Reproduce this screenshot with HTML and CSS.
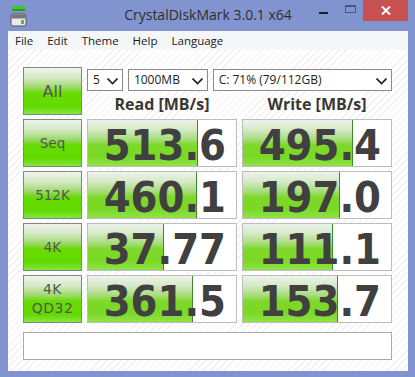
FILE: index.html
```html
<!DOCTYPE html>
<html lang="en">
<head>
    <meta charset="UTF-8">
    <title>CrystalDiskMark 3.0.1 x64</title>
    <link rel="stylesheet" href="styles.css">
</head>
<body>
    <div class="window">
        <div class="titlebar">
            <div class="app-icon">
                <svg width="18" height="22" viewBox="0 0 18 22">
                    <rect x="1" y="0" width="15" height="3" rx="1" fill="#3fc43a"/>
                    <rect x="2" y="3" width="13" height="2" fill="#2a9a28"/>
                    <rect x="1" y="8" width="15" height="12" rx="2" fill="#e9e9e9" stroke="#555" stroke-width="1"/>
                    <rect x="1.5" y="8.5" width="14" height="4" fill="#777"/>
                    <rect x="11" y="14" width="3" height="4" fill="#3fc43a"/>
                </svg>
            </div>
            <div class="title">CrystalDiskMark 3.0.1 x64</div>
            <div class="controls">
                <div class="ctl min"><span class="dash"></span></div>
                <div class="ctl max"><span class="box"></span></div>
                <div class="ctl close">
                    <svg width="10" height="9" viewBox="0 0 10 9">
                        <path d="M1 0.5 L9 8.5 M9 0.5 L1 8.5" stroke="#fff" stroke-width="2"/>
                    </svg>
                </div>
            </div>
        </div>

        <div class="client">
            <div class="menubar">
                <span>File</span>
                <span>Edit</span>
                <span>Theme</span>
                <span>Help</span>
                <span>Language</span>
            </div>

            <div class="panel">
                <div class="test-btn all">All</div>
                <div class="top">
                    <div class="selects">
                        <div class="dropdown count">5 <svg class="chev" width="11" height="7" viewBox="0 0 11 7"><path d="M0.5 0.5 L5.5 5.5 L10.5 0.5" fill="none" stroke="#222" stroke-width="1.6"/></svg></div>
                        <div class="dropdown size">1000MB <svg class="chev" width="11" height="7" viewBox="0 0 11 7"><path d="M0.5 0.5 L5.5 5.5 L10.5 0.5" fill="none" stroke="#222" stroke-width="1.6"/></svg></div>
                        <div class="dropdown drive">C: 71% (79/112GB) <svg class="chev" width="11" height="7" viewBox="0 0 11 7"><path d="M0.5 0.5 L5.5 5.5 L10.5 0.5" fill="none" stroke="#222" stroke-width="1.6"/></svg></div>
                    </div>
                    <div class="headers">
                        <div>Read [MB/s]</div>
                        <div>Write [MB/s]</div>
                    </div>
                </div>

                <div class="test-btn">Seq</div>
                <div class="result"><div class="fill" style="width: 74.3%"></div><div class="value">513.6</div></div>
                <div class="result"><div class="fill" style="width: 74.3%"></div><div class="value">495.4</div></div>

                <div class="test-btn">512K</div>
                <div class="result"><div class="fill" style="width: 73.6%"></div><div class="value">460.1</div></div>
                <div class="result"><div class="fill" style="width: 65.5%"></div><div class="value">197.0</div></div>

                <div class="test-btn">4K</div>
                <div class="result"><div class="fill" style="width: 51.4%"></div><div class="value">37.77</div></div>
                <div class="result"><div class="fill" style="width: 60.8%"></div><div class="value">111.1</div></div>

                <div class="test-btn two-line">4K<br>QD32</div>
                <div class="result"><div class="fill" style="width: 70.9%"></div><div class="value">361.5</div></div>
                <div class="result"><div class="fill" style="width: 64.2%"></div><div class="value">153.7</div></div>

                <div class="comment"></div>
            </div>
        </div>
    </div>
</body>
</html>
```

FILE: styles.css
```css
body {
    margin: 0;
    background-color: #8194d0;
    font-family: "Open Sans", "Noto Sans", sans-serif;
}

.window {
    width: 415px;
    height: 377px;
    box-sizing: border-box;
    padding: 0 7px 6px 8px;
}

.titlebar {
    height: 31px;
    display: grid;
    grid-template-columns: 1fr auto 1fr;
    align-items: start;
}

.app-icon {
    padding: 6px 0 0 2px;
}

.title {
    font-size: 14px;
    color: #2e2e2e;
    line-height: 20px;
    padding-top: 5px;
}

.controls {
    display: flex;
    justify-content: flex-end;
}

.ctl {
    height: 21px;
    display: flex;
    align-items: center;
    justify-content: center;
}

.ctl.min {
    width: 27px;
}

.ctl.max {
    width: 26px;
}

.ctl.close {
    width: 45px;
    background-color: #c75050;
}

.dash {
    width: 9px;
    height: 2px;
    background-color: #1e1e1e;
    margin-top: 5px;
}

.box {
    width: 9px;
    height: 5px;
    border: 1px solid #4a5578;
    border-top-width: 2px;
    margin-top: -4px;
}

.client {
    background-color: #fff;
    height: 340px;
}

.menubar {
    height: 19px;
    background-color: #f5f6f7;
    display: flex;
    padding-left: 7px;
    font-size: 11.5px;
    line-height: 19px;
    color: #1a1a1a;
}

.menubar span {
    padding: 0 7px 0 0;
    margin-right: 7px;
}

.panel {
    height: 321px;
    box-sizing: border-box;
    padding: 17px 16px 11px 15px;
    background: repeating-linear-gradient(135deg, #ffffff 0 4px, #f1f1f1 4px 5px);
    display: grid;
    grid-template-columns: 59px 150px 150px;
    grid-template-rows: repeat(5, 48px) 28px;
    column-gap: 5px;
    row-gap: 4px;
}

.test-btn {
    box-sizing: border-box;
    border: 1px solid #7b8b78;
    background: linear-gradient(#f1f4ef 0%, #d3e9c3 22%, #98d863 44%, #67dc02 54%, #62da00 84%, #88e446 100%);
    display: flex;
    align-items: center;
    justify-content: center;
    text-align: center;
    font-family: "DejaVu Sans", sans-serif;
    font-size: 13.5px;
    color: #555;
}

.test-btn.all {
    font-size: 16px;
}

.test-btn.two-line {
    font-size: 14px;
    line-height: 19px;
    letter-spacing: 0.5px;
}

.top {
    grid-column: 2 / 4;
    display: flex;
    flex-direction: column;
}

.selects {
    display: flex;
    gap: 5px;
    margin-top: 2px;
}

.dropdown {
    height: 22px;
    box-sizing: border-box;
    border: 1px solid #8a8a8a;
    background-color: #fff;
    font-size: 12px;
    line-height: 20px;
    padding-left: 5px;
    color: #222;
    position: relative;
}

.chev {
    position: absolute;
    right: 4px;
    top: 8px;
}

.dropdown.count {
    width: 36px;
}

.dropdown.size {
    width: 80px;
}

.dropdown.drive {
    width: 180px;
}

.headers {
    display: grid;
    grid-template-columns: 150px 150px;
    column-gap: 5px;
    margin-top: 3px;
    font-size: 16px;
    font-weight: bold;
    line-height: 20px;
    color: #3a3632;
    text-align: center;
}

.result {
    position: relative;
    box-sizing: border-box;
    border: 1px solid #bdbdbd;
    background-color: #fff;
}

.fill {
    position: absolute;
    left: 0;
    top: 0;
    bottom: 0;
    box-sizing: border-box;
    border-right: 1px solid #3c8a2c;
    background: linear-gradient(#eef2ec 0%, #d6eac8 20%, #a8dc7c 42%, #7fd82c 54%, #7ad924 80%, #8fe24a 100%);
}

.value {
    position: relative;
    text-align: right;
    padding-right: 10px;
    font-family: "DejaVu Sans Condensed", "DejaVu Sans", sans-serif;
    font-stretch: condensed;
    font-weight: bold;
    font-size: 43px;
    line-height: 50px;
    color: #404040;
}

.comment {
    grid-column: 1 / 4;
    margin-top: 5px;
    height: 28px;
    box-sizing: border-box;
    border: 1px solid #a9a9a9;
    background-color: #fff;
}
```
